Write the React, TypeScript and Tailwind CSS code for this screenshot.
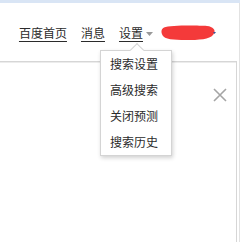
import React from 'react';

const font = { fontFamily: '"Noto Sans CJK SC", "Liberation Sans", sans-serif' };

function Caret() {
  return (
    <svg width="7" height="4" viewBox="0 0 7 4" className="mt-[2px]">
      <path d="M0 0 L7 0 L3.5 4 Z" fill="#999" />
    </svg>
  );
}

function Scribble() {
  return (
    <svg width="56" height="16" viewBox="0 0 56 16">
      <path
        d="M4 2.5 C10 0 38 0.5 47 1 C53 1.5 56 5 54 8.5 C52 13 44 15 30 15 C18 15 7 15 3.5 11.5 C0.5 8 1 4 4 2.5 Z"
        fill="#f43a3a"
      />
      <path d="M53 7 L56 7 L54.5 9 Z" fill="#3b5998" />
    </svg>
  );
}

function CloseIcon() {
  return (
    <svg width="14" height="14" viewBox="0 0 14 14">
      <path d="M1 1 L13 13 M13 1 L1 13" stroke="#a5a5a5" strokeWidth="1.6" />
    </svg>
  );
}

const menuItems = ['搜索设置', '高级搜索', '关闭预测', '搜索历史'];

export default function App() {
  return (
    <div className="relative w-[240px] h-[242px] overflow-hidden bg-white text-[#2b2b2b]" style={font}>
      <div className="h-[3px] bg-[#d9e5f5]" />
      <div className="h-[239px] w-[240px] border-r border-[#e2e2e2] flex flex-col">
        {/* header nav */}
        <div className="h-[58px] flex justify-end pr-[23px]">
          <nav className="mt-[22px] h-[16px] flex items-center text-[12px] leading-[16px]">
            <a className="underline underline-offset-[3px]">百度首页</a>
            <a className="ml-[14px] underline underline-offset-[3px]">消息</a>
            <a className="ml-[14px] underline underline-offset-[3px]">设置</a>
            <span className="ml-[3px] flex items-center"><Caret /></span>
            <span className="ml-[7px] flex items-center"><Scribble /></span>
          </nav>
        </div>
        {/* panel */}
        <div className="relative w-[237px] flex-1 border-t border-r border-[#d6d6d6] shadow-[inset_0_1px_0_#ececec]">
          <button className="absolute top-[26px] right-[9px]">
            <CloseIcon />
          </button>
        </div>
      </div>

      {/* settings dropdown */}
      <div className="absolute left-[100px] top-[50px] w-[72px] bg-white border border-[#d4d4d4] shadow-[1px_2px_4px_rgba(0,0,0,0.18)]">
        <div className="absolute -top-[6px] left-[31px] w-[10px] h-[10px] rotate-45 bg-white border-l border-t border-[#d4d4d4]" />
        <ul className="relative text-[12px]">
          {menuItems.map((item) => (
            <li key={item} className="h-[26px] flex items-center pl-[9px]">
              {item}
            </li>
          ))}
        </ul>
      </div>
    </div>
  );
}
